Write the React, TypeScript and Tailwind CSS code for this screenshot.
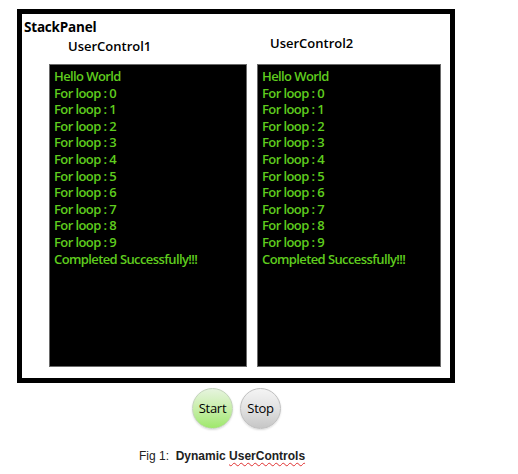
import React from "react";

const lines = [
  "Hello World",
  "For loop : 0",
  "For loop : 1",
  "For loop : 2",
  "For loop : 3",
  "For loop : 4",
  "For loop : 5",
  "For loop : 6",
  "For loop : 7",
  "For loop : 8",
  "For loop : 9",
  "Completed Successfully!!!",
];

function Console({ w }: { w: string }) {
  return (
    <div className={`${w} h-[303px] bg-black border border-[#6a6a6a] pl-[4px] pt-[3px]`}>
      {lines.map((l, i) => (
        <div key={i} className="text-[13px] leading-[16.6px] font-semibold text-[#5fcc1e] whitespace-nowrap tracking-[-0.6px]">
          {l}
        </div>
      ))}
    </div>
  );
}

export default function App() {
  return (
    <div className="w-[518px] h-[474px] bg-white font-['Open_Sans',sans-serif] text-black">
      <div className="ml-[17px] mt-[9px] w-[438px] h-[374px] border-[5px] border-black">
        <div className="pl-[2px] pt-[5px] h-[21px] text-[13.5px] leading-[16px] font-bold tracking-[-0.2px]">StackPanel</div>
        <div className="flex ml-[27px] gap-[10px]">
          <div className="flex flex-col">
            <div className="h-[29px] pt-[3px] pl-[19px] text-[13px] leading-[16px] font-semibold">UserControl1</div>
            <Console w="w-[198px]" />
          </div>
          <div className="flex flex-col">
            <div className="h-[29px] pt-0 pl-[13px] text-[13px] leading-[16px] font-semibold">UserControl2</div>
            <Console w="w-[184px]" />
          </div>
        </div>
      </div>
      <div className="flex ml-[192px] mt-[5px] gap-[7px]">
        <div className="w-[41px] h-[41px] rounded-full border border-[#c4d4bc] bg-linear-to-b from-[#e6f4de] via-[#c8eeaa] to-[#9ee86a] flex items-center justify-center text-[13px] tracking-[-0.3px] shadow-[0_1px_2px_rgba(0,0,0,0.15)]">
          Start
        </div>
        <div className="w-[41px] h-[41px] rounded-full border border-[#c0c0c0] bg-linear-to-b from-[#f4f4f4] via-[#e2e2e2] to-[#c6c6c6] flex items-center justify-center text-[13px] tracking-[-0.3px] shadow-[0_1px_2px_rgba(0,0,0,0.15)]">
          Stop
        </div>
      </div>
      <div className="ml-[139px] mt-[20px] font-['Liberation_Sans',Arial,sans-serif] text-[12px] leading-[14px] text-[#222] whitespace-nowrap">
        Fig 1:&nbsp; <span className="font-bold">Dynamic <span className="underline decoration-wavy decoration-[#e03030] decoration-1 underline-offset-2">UserControls</span></span>
      </div>
    </div>
  );
}
